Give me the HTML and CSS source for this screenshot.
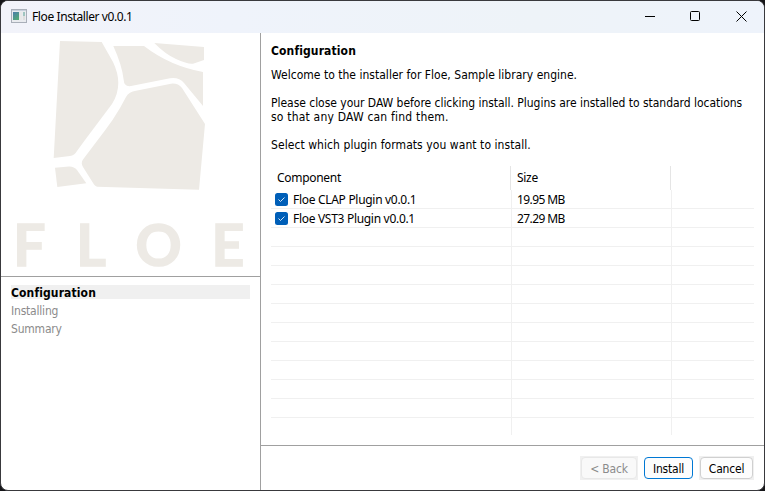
FILE: index.html
```html
<!DOCTYPE html>
<html lang="en">
<head>
<meta charset="utf-8">
<title>Floe Installer v0.0.1</title>
<link rel="stylesheet" href="styles.css">
</head>
<body>
<div class="window">
  <header class="titlebar">
    <svg class="app-icon" width="16" height="14" viewBox="0 0 16 14">
      <defs><linearGradient id="pane" x1="0" y1="0" x2="0.6" y2="1"><stop offset="0" stop-color="#4c7dab"/><stop offset="1" stop-color="#53a878"/></linearGradient></defs>
      <rect x=".5" y=".5" width="15" height="13" fill="#e9ebef" stroke="#a9afb9"/>
      <rect x="1" y="1" width="14" height="1" fill="#c8d0dc"/>
      <rect x="2" y="3" width="6" height="8" fill="url(#pane)"/>
      <rect x="8" y="3" width="3" height="8" fill="#e8e8e8"/>
      <rect x="12" y="3" width="2" height="4" fill="#9fc5c0"/>
      <rect x="12" y="7" width="2" height="4" fill="#dedede"/>
    </svg>
    <span class="title">Floe Installer v0.0.1</span>
    <div class="controls">
      <svg width="46" height="32" viewBox="0 0 46 32"><path d="M18 15.500h10"/></svg>
      <svg width="46" height="32" viewBox="0 0 46 32"><rect x="17.500" y="10.500" width="9" height="9" rx="1"/></svg>
      <svg width="46" height="32" viewBox="0 0 46 32"><path d="M17.500 10.500l10 10M27.500 10.500l-10 10"/></svg>
    </div>
  </header>
  <div class="body">
    <aside class="sidebar">
      <svg class="logo" width="259" height="243" viewBox="1 33 259 243">
        <path d="M60 41L101.700 42L113 62Q118.300 73 118.300 83Q118.300 94 112 104L85 140L77 151Q74.500 155.500 70 156L53.700 158Z"/>
        <path d="M113.300 46H144Q170 66 203 72V106L184 83Q179 77 170 78.300L131 86Q124 87 123.700 80Q122 65 113.300 46Z"/>
        <path d="M154.300 43L204 47V60L193 63.700Q188 64.500 176 59Q165 54 154.300 43Z"/>
        <path d="M136 90.700L171 83.700Q178 83 182 88L205 124L199 189.700L97 186.700Q95 186 94 184.500L83 167Q80.500 163 83 159.500L105.300 130Q113 120 120 108L126 97Q129 91.500 136 90.700Z"/>
        <path d="M55 167.700L69 166.500Q74 166.300 77 170L86.300 183.300L57.300 187Z"/>
        <text y="266.300" x="13.200 76.200 135.500 211.500">FLOE</text>
      </svg>
      <ol class="steps">
        <li class="current"><span>Configuration</span></li>
        <li><span>Installing</span></li>
        <li><span>Summary</span></li>
      </ol>
    </aside>
    <main class="main">
      <section class="page">
        <h1>Configuration</h1>
        <p><span class="welcome">Welcome to the installer for Floe, Sample library engine.</span></p>
        <p><span class="notice">Please close your DAW before clicking install. Plugins are installed to standard locations</span><br><span class="notice-end">so that any DAW can find them.</span></p>
        <p><span class="prompt">Select which plugin formats you want to install.</span></p>
        <div class="table">
          <div class="head"><span>Component</span><span>Size</span><span></span></div>
          <div class="row"><span><svg class="check" width="13" height="13" viewBox="0 0 13 13"><rect width="13" height="13" rx="2.500"/><path d="M3.500 6.500l2 2 4-4"/></svg>Floe CLAP Plugin v0.0.1</span><span class="size">19.95 MB</span><span></span></div>
          <div class="row"><span><svg class="check" width="13" height="13" viewBox="0 0 13 13"><rect width="13" height="13" rx="2.500"/><path d="M3.500 6.500l2 2 4-4"/></svg>Floe VST3 Plugin v0.0.1</span><span class="size">27.29 MB</span><span></span></div>
          <div class="row"><span></span><span></span><span></span></div>
          <div class="row"><span></span><span></span><span></span></div>
          <div class="row"><span></span><span></span><span></span></div>
          <div class="row"><span></span><span></span><span></span></div>
          <div class="row"><span></span><span></span><span></span></div>
          <div class="row"><span></span><span></span><span></span></div>
          <div class="row"><span></span><span></span><span></span></div>
          <div class="row"><span></span><span></span><span></span></div>
          <div class="row"><span></span><span></span><span></span></div>
          <div class="row"><span></span><span></span><span></span></div>
          <div class="row last"><span></span><span></span><span></span></div>
        </div>
      </section>
      <footer class="footer">
        <div class="slot back"><button disabled>&lt; Back</button></div>
        <div class="slot install"><button>Install</button></div>
        <div class="slot cancel"><button>Cancel</button></div>
      </footer>
    </main>
  </div>
</div>
</body>
</html>
```
FILE: styles.css
```css
* { box-sizing: border-box; }
body {
  margin: 0;
  background: #151518;
  color: #000;
  font: 12px/14px "DejaVu Sans Condensed", "DejaVu Sans", sans-serif;
  font-stretch: condensed;
}
.window {
  width: 765px;
  height: 491px;
  display: flex;
  flex-direction: column;
  border: 1px solid #39393d;
  border-radius: 8px;
  background: #fff;
  overflow: hidden;
}
.titlebar {
  height: 32px;
  flex: none;
  display: flex;
  align-items: center;
  padding-left: 10px;
  background: linear-gradient(90deg, #f2f3fa, #eff3fb 30%, #eef3f8 70%, #eef3fb);
}
.app-icon { margin-top: -2px; }
.title {
  margin-left: 5px;
  font: 12px/16px "Noto Sans", sans-serif;
  letter-spacing: -0.4px;
}
.controls { display: flex; margin-left: auto; margin-right: -1px; }
.controls svg { fill: none; stroke: #000; stroke-width: 1; }
.body { flex: 1; display: flex; }
.sidebar { width: 260px; border-right: 1px solid #a0a0a0; }
.logo {
  display: block;
  overflow: visible;
  fill: #edeae5;
}
.logo text {
  font: bold 57px Lato, sans-serif;
  stroke: #edeae5;
  stroke-width: 1.6px;
}
.steps {
  margin: 0;
  padding: 8px 10px;
  border-top: 1px solid #a0a0a0;
  list-style: none;
  color: #8b8b8b;
}
.steps li { height: 14px; margin-bottom: 4px; padding-top: 1px; letter-spacing: -0.2px; }
.steps .current { background: #f0f0f0; color: #000; font-weight: bold; letter-spacing: 0.12px; }
.main { flex: 1; display: flex; flex-direction: column; }
.page { height: 412px; padding: 11px 10px 0; }
h1 { margin: 0 0 10px; font-size: 12px; line-height: 14px; letter-spacing: 0.12px; }
p { margin: 0 0 14px; white-space: nowrap; }
.welcome { letter-spacing: 0.02px; }
.notice { letter-spacing: -0.033px; }
.notice-end { letter-spacing: 0.2px; }
.prompt { letter-spacing: 0.065px; }
.table { font-family: "Noto Sans", sans-serif; letter-spacing: -0.3px; }
.head { display: grid; grid-template-columns: 240px 160px 1fr; height: 24px; line-height: 24px; }
.head span { border-right: 1px solid #e5e5e5; padding-left: 6px; }
.head span:last-child, .row span:last-child { border-right: 0; }
.row { display: grid; grid-template-columns: 241px 160px 1fr; height: 19px; line-height: 16px; border-bottom: 1px solid #f0f0f0; width: 483px; }
.row span { display: flex; align-items: center; border-right: 1px solid #f0f0f0; padding: 1px 0 0 5px; }
.row span:first-child { padding-left: 4px; }
.row .size { letter-spacing: -0.6px; }
.row.last { border-bottom: 0; height: 17px; }
.check { margin-right: 5px; }
.check rect { fill: #005fb8; }
.check path { fill: none; stroke: #d5e7f8; stroke-width: 1; }
.footer {
  flex: 1;
  display: flex;
  justify-content: flex-end;
  gap: 6px;
  padding: 10px 10px 0;
  border-top: 1px solid #a0a0a0;
}
.slot { height: 24px; padding: 1px; background: #f0f0f0; }
.slot button {
  display: block;
  width: 100%;
  height: 22px;
  padding: 1px 0 0;
  border: 1px solid #d0d0d0;
  border-radius: 4px;
  background: #fdfdfd;
  font: inherit;
  color: #000;
  letter-spacing: -0.2px;
}
.back { width: 58px; }
.back button { color: #8b8b8b; background: #f9f9f9; border-color: #e8e8e8; }
.install { width: 49px; padding: 1px 0; background: #fff; }
.install button { border-color: #0078d4; }
.cancel { width: 55px; }
```
